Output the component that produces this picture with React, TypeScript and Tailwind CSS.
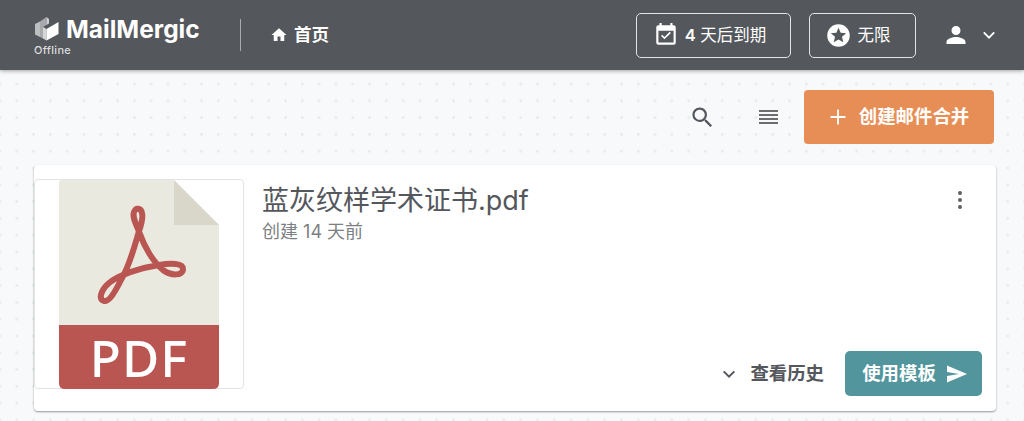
import React from "react";

const font = "font-['Inter','Noto_Sans_CJK_SC',sans-serif]";

function Logo() {
  return (
    <svg width="24" height="24" viewBox="0 0 24 24" className="block">
      <path d="M0 7 L5 4.500 L5 20 L0 17.500 Z" fill="#bdbec0" />
      <path d="M5 4.500 L11.500 0 L11.500 8 L8 10 L8 21.500 L5 20 Z" fill="#a8a9ac" />
      <path d="M11.500 0 L14 2 L14 6.500 L11.500 8 Z" fill="#cfd0d1" />
      <path d="M8 10 L11.500 12 L11.500 23.500 L8 21.500 Z" fill="#d6d6d7" />
      <path d="M11.500 12 L23.500 5 L23.500 17 L11.500 23.500 Z" fill="#ffffff" />
    </svg>
  );
}

function PdfIcon() {
  return (
    <svg width="160" height="209" viewBox="0 0 160 209" className="block overflow-visible">
      <path d="M3 0 H115 L160 45 V145 H0 V3 Q0 0 3 0 Z" fill="#e9e9e0" />
      <path d="M115 0 L160 45 H115 Z" fill="#d9d7ca" />
      <path d="M0 145 H160 V203 Q160 209 154 209 H6 Q0 209 0 203 Z" fill="#b95652" />
      <path
        d="M78 58 C74 72 68 90 62 100 C56 112 50 122 45 121 C39 119 42 110 50 103 C60 95 80 88 100 85 C112 83 124 83 124 89 C124 96 112 96 104 90 C94 82 85 66 81 54 C77 44 73 37 75 32 C77 27 82 28 83 33 C85 40 80 50 78 58 Z"
        fill="none"
        stroke="#b95652"
        strokeWidth="6"
        strokeLinejoin="round"
      />
      <text x="80" y="197" textAnchor="middle" fontSize="51" fontWeight="500" fill="#ffffff" fontFamily="'Noto Sans', sans-serif" letterSpacing="1">
        PDF
      </text>
    </svg>
  );
}

export default function App() {
  return (
    <div
      className={`${font} h-[421px] w-[1024px] overflow-hidden bg-[#f8f9fb] bg-[radial-gradient(#e6ebec_1px,transparent_1.7px)] bg-[length:16.8px_16.8px] bg-[position:-8.4px_-8.4px]`}
    >
      <header className="flex h-[70px] items-center bg-[#54575c] pl-[32px] pr-[26px] text-white shadow-[0_1px_4px_rgba(0,0,0,0.35)]">
        <div className="w-[208px]">
          <div className="flex items-center gap-[7px] pl-[3px] pt-[2px]">
            <Logo />
            <span className="text-[24.5px] font-bold leading-[28px]">MailMergic</span>
          </div>
          <div className="mt-[1px] pl-[2px] text-[11px] font-medium leading-[13px] tracking-[0.3px] text-[#dcdcdc]">Offline</div>
        </div>
        <div className="h-[32px] w-px bg-[#a9abae]" />
        <div className="ml-[29px] flex items-center gap-[6px]">
          <svg width="18" height="18" viewBox="0 0 24 24" fill="#fff">
            <path d="M10 20v-6h4v6h5v-8h3L12 3 2 12h3v8z" />
          </svg>
          <span className="text-[17.5px] font-bold">首页</span>
        </div>
        <div className="ml-auto flex items-center">
          <button className="flex h-[45px] w-[155px] items-center justify-center gap-[6px] rounded-[5px] border border-[#e3e4e5] pr-[8px] text-[16.5px] font-normal">
            <svg width="26" height="26" viewBox="0 0 24 24" fill="#fff">
              <path d="M19 3h-1V1h-2v2H8V1H6v2H5a2 2 0 0 0-2 2v14a2 2 0 0 0 2 2h14a2 2 0 0 0 2-2V5a2 2 0 0 0-2-2zm0 16H5V8h14v11zm-2.47-8.94-1.06-1.06-4.88 4.88-2.12-2.12-1.06 1.06 3.18 3.18z" />
            </svg>
            <span>
              <span className="font-semibold">4</span> 天后到期
            </span>
          </button>
          <button className="ml-[18px] flex h-[45px] w-[107px] items-center justify-center gap-[6px] rounded-[5px] border border-[#e3e4e5] pr-[10px] text-[16.5px] font-normal">
            <svg width="27" height="27" viewBox="0 0 24 24" fill="#fff">
              <path d="M12 2a10 10 0 1 0 0 20 10 10 0 0 0 0-20zm4.24 16L12 15.45 7.77 18l1.12-4.81-3.73-3.23 4.92-.42L12 5l1.92 4.53 4.92.42-3.73 3.23L16.23 18z" />
            </svg>
            <span>无限</span>
          </button>
          <svg className="ml-[28px]" width="24" height="24" viewBox="0 0 24 24" fill="#fff">
            <path d="M12 12a4.5 4.5 0 1 0 0-9 4.5 4.5 0 0 0 0 9zm0 2c-3.3 0-9.5 1.7-9.5 5v2h19v-2c0-3.3-6.200-5-9.500-5z" />
          </svg>
          <svg className="ml-[12px]" width="18" height="18" viewBox="0 0 24 24" fill="none" stroke="#fff" strokeWidth="2.400">
            <path d="M5 8.500l7 7 7-7" />
          </svg>
        </div>
      </header>

      <main className="pl-[34px] pr-[28px]">
        <div className="flex h-[95px] items-start justify-end pr-[2px] pt-[20px]">
          <div className="flex h-[54px] items-center">
            <svg width="27" height="27" viewBox="0 0 24 24" fill="#54575c">
              <path d="M15.500 14h-.79l-.28-.27A6.470 6.470 0 0 0 16 9.500 6.500 6.500 0 1 0 9.500 16c1.610 0 3.090-.59 4.230-1.570l.27.28v.79l5 4.990L20.490 19l-4.990-5zm-6 0C7.010 14 5 11.990 5 9.500S7.010 5 9.500 5 14 7.010 14 9.500 11.990 14 9.500 14z" />
            </svg>
            <div className="ml-[43px] mr-[26px] flex w-[19px] flex-col gap-[2px]">
              <span className="h-[2px] bg-[#6a6c70]" />
              <span className="h-[2px] bg-[#6a6c70]" />
              <span className="h-[2px] bg-[#6a6c70]" />
              <span className="h-[2px] bg-[#6a6c70]" />
            </div>
            <button className="flex h-[54px] w-[190px] items-center justify-center gap-[12px] rounded-[4px] bg-[#e68e55] text-[18.4px] font-bold text-white">
              <svg width="18" height="18" viewBox="0 0 18 18" stroke="#fff" strokeWidth="1.800">
                <path d="M9 1.500v15M1.500 9h15" />
              </svg>
              <span>创建邮件合并</span>
            </button>
          </div>
        </div>

        <section className="flex h-[246px] rounded-[4px] bg-white shadow-[0_1px_2px_rgba(0,0,0,0.4)]">
          <div className="mt-[14px] flex h-[210px] w-[210px] justify-center rounded-[4px] border border-[#e2e3e5]">
            <PdfIcon />
          </div>
          <div className="flex min-w-0 flex-1 flex-col pb-[15px] pl-[18px] pr-[14px]">
            <div className="flex items-start justify-between pr-[10px] pt-[18px]">
              <div>
                <div className="text-[27px] leading-[36px] text-[#54575c]">蓝灰纹样学术证书.pdf</div>
                <div className="mt-[2px] text-[18px] leading-[22px] text-[#7d7f82]">创建 14 天前</div>
              </div>
              <svg className="mt-[5px]" width="24" height="24" viewBox="0 0 24 24" fill="#5f6266">
                <circle cx="12" cy="5" r="2" />
                <circle cx="12" cy="12" r="2" />
                <circle cx="12" cy="19" r="2" />
              </svg>
            </div>
            <div className="mt-auto flex items-center justify-end">
              <svg width="16" height="16" viewBox="0 0 24 24" fill="none" stroke="#54575c" strokeWidth="3">
                <path d="M4 8l8 8 8-8" />
              </svg>
              <span className="ml-[13px] text-[18.4px] font-bold text-[#54575c]">查看历史</span>
              <button className="ml-[21px] flex h-[45px] w-[137px] items-center justify-center gap-[10px] rounded-[5px] bg-[#52959c] pl-[3px] text-[18.4px] font-bold text-white">
                <span>使用模板</span>
                <svg width="22" height="20" viewBox="0 0 22 20" fill="#fff">
                  <path d="M1 1.500 L21 10 L1 18.500 L1 12 L13 10 L1 8 Z" />
                </svg>
              </button>
            </div>
          </div>
        </section>
      </main>
    </div>
  );
}
